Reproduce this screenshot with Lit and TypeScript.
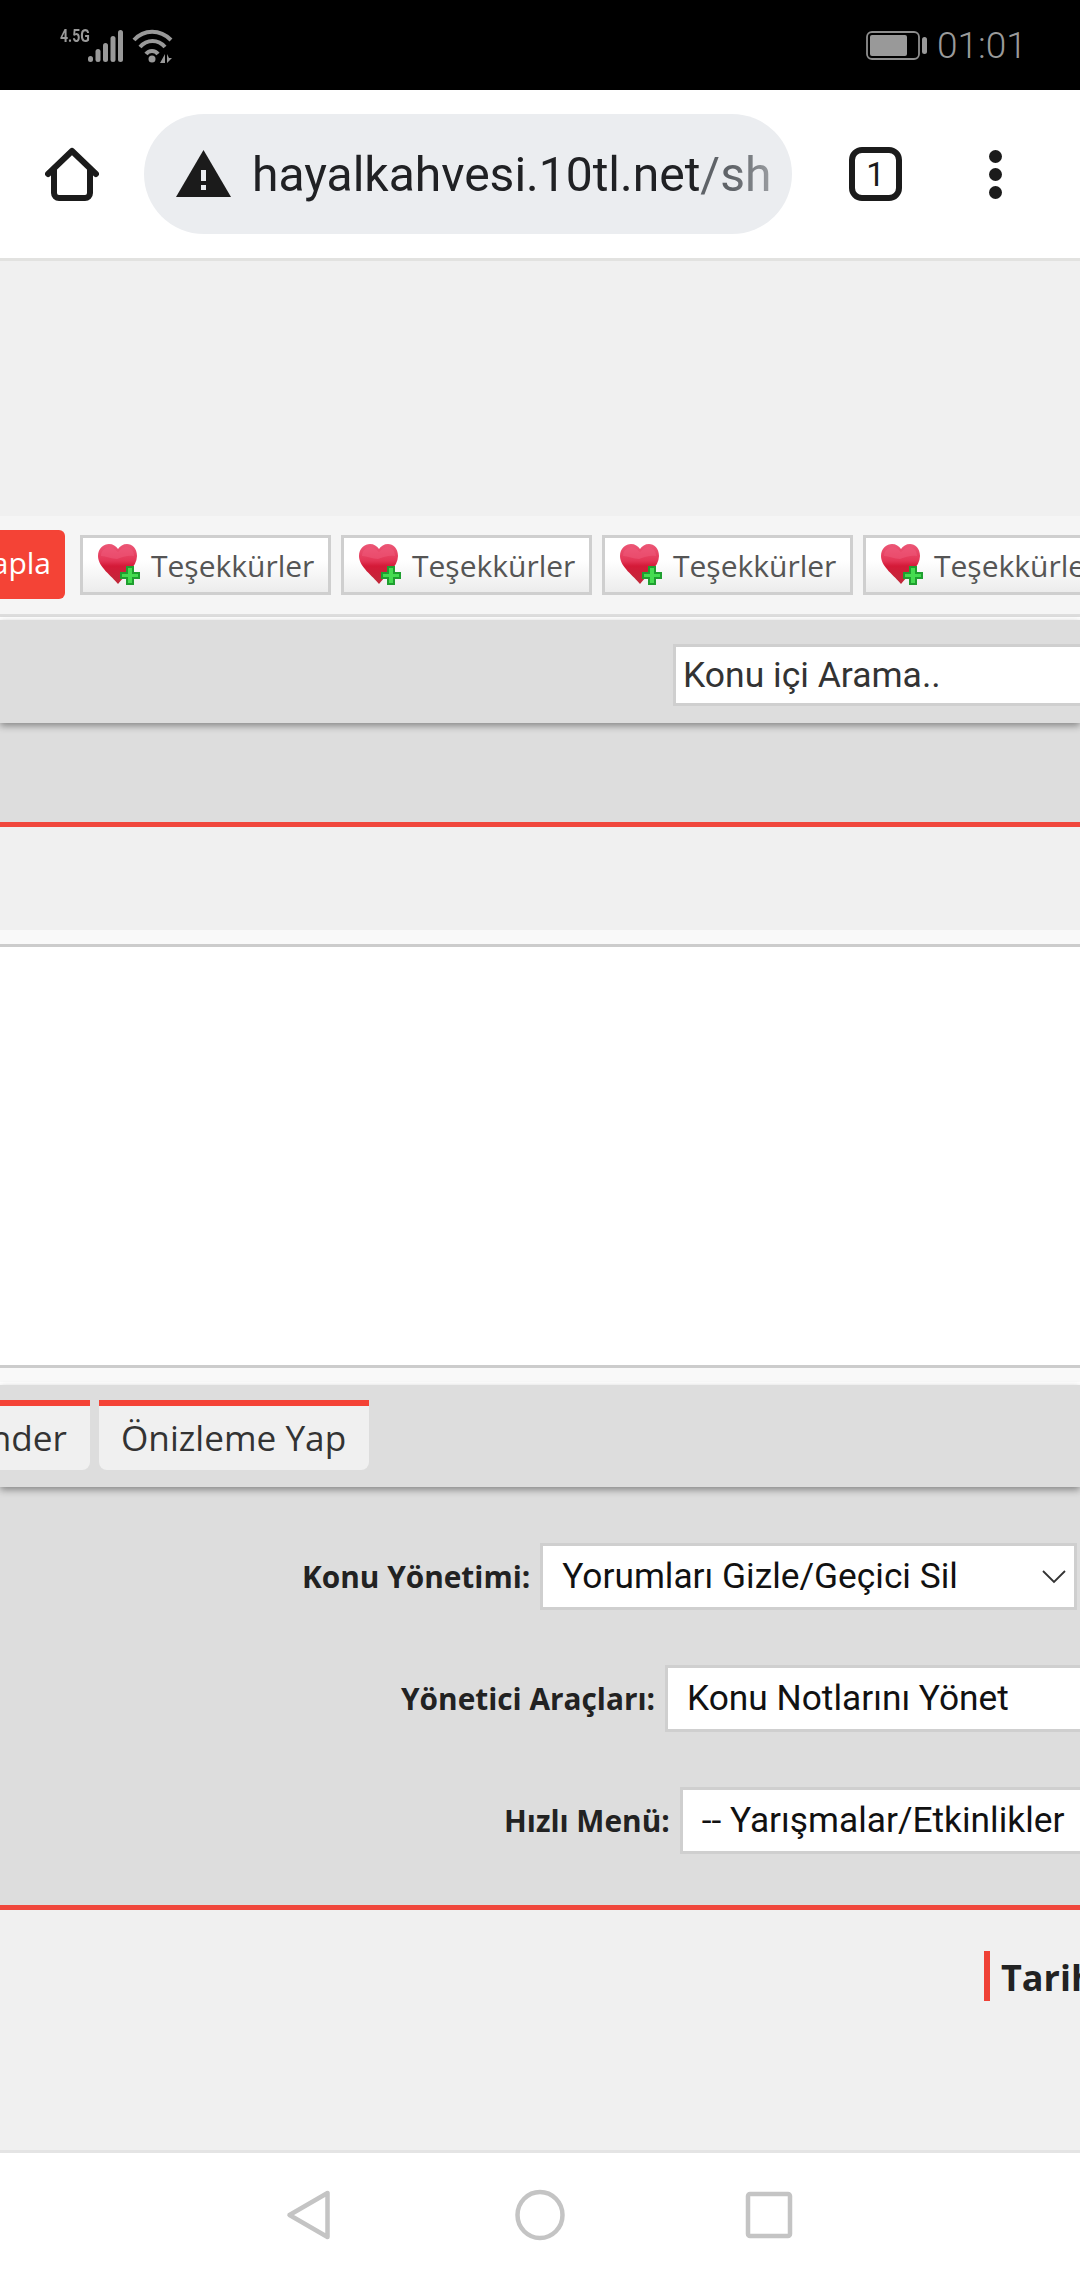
import { LitElement, html, css } from "lit";
import { customElement } from "lit/decorators.js";

const heart = (id: string) => html`<svg class="heart" viewBox="0 0 42 42" width="42" height="42">
  <defs>
    <linearGradient id=${id} x1="0" y1="0" x2="0" y2="1">
      <stop offset="0" stop-color="#ec5877"/>
      <stop offset=".42" stop-color="#e33556"/>
      <stop offset=".55" stop-color="#d41a38"/>
      <stop offset="1" stop-color="#c02a3a"/>
    </linearGradient>
  </defs>
  <path d="M20 40 C14 32 0 23 0 12 C0 4 6 0 11 0 C15 0 18 2 20 5 C22 2 25 0 29 0 C34 0 39 4 39 12 C39 23 26 32 20 40Z" fill=${`url(#${id})`}/>
  <path d="M3 12 C3 6 8 3 12 3 C15 3 18 6 20 8 C22 6 25 3 28 3 C32 3 36 6 36 12 C30 11 25 13 19 15 C13 15 8 12 3 12Z" fill="#ee5a7a" opacity=".55"/>
  <path d="M28 22 h8 v6 h6 v7 h-6 v6 h-8 v-6 h-6 v-7 h6Z" fill="#1f9f30"/>
  <path d="M30 24 h4 v6 h6 v3 h-6 v6 h-4 v-6 h-6 v-3 h6Z" fill="#45dc50"/>
</svg>`;

@customElement("app-root")
export class AppRoot extends LitElement {
  static styles = css`
    :host { display: block; width: 1080px; height: 2280px; overflow: hidden; background: #fff; font-family: "Open Sans", sans-serif; }
    .status { height: 90px; background: #000; display: flex; position: relative; color: #999; }
    .status-left { display: flex; padding: 28px 0 0 60px; height: 34px; }
    .net { font: 700 19px/15px Roboto, sans-serif; width: 30px; height: 15px; transform: scaleX(.74); transform-origin: 0 0; white-space: nowrap; }
    .status-right { display: flex; margin-left: auto; padding: 31px 57px 0 0; align-items: flex-start; }
    .time { font: 300 37px/29px Roboto, sans-serif; margin-left: 9px; color: #9a9a9a; width: 86px; white-space: nowrap; }

    .toolbar { height: 168px; background: #fff; border-bottom: 3px solid #e2e2e0; display: flex; align-items: center; box-sizing: content-box; }
    .home { margin-left: 45px; flex: none; }
    .pill { margin-left: 45px; width: 648px; height: 120px; border-radius: 60px; background: #ebedf0; display: flex; align-items: center; flex: none; }
    .warn { margin-left: 32px; flex: none; margin-top: -2px; }
    .url { margin-left: 21px; width: 522px; overflow: hidden; white-space: nowrap; font: 400 48px/60px Roboto, sans-serif; color: #202124; margin-top: 2px; -webkit-mask-image: linear-gradient(to right, #000 92%, rgba(0,0,0,.55) 100%); mask-image: linear-gradient(to right, #000 92%, rgba(0,0,0,.55) 100%); }
    .url span { color: #5f6368; }
    .tabs { margin-left: 57px; width: 53px; height: 54px; box-sizing: border-box; border: 6px solid #1b1b1b; border-radius: 13px; display: flex; align-items: center; justify-content: center; font: 400 33px/1 Roboto, sans-serif; color: #1b1b1b; flex: none; }
    .dots { margin-left: 87px; display: flex; flex-direction: column; gap: 5px; flex: none; }
    .dots i { width: 13px; height: 13px; border-radius: 50%; background: #1b1b1b; display: block; }

    .ad { height: 255px; background: #f0f0f0; }
    .thanks { height: 98px; background: #f5f5f5; border-bottom: 3px solid #ddd; display: flex; align-items: center; gap: 10px; overflow: hidden; }
    .white3 { height: 3px; background: #fff; }
    .apla { flex: none; width: 65px; height: 69px; margin: -2px 5px 0 0; background: #f44336; color: #fff; border-radius: 0 6px 6px 0; font-size: 30px; line-height: 66px; display: flex; justify-content: flex-end; padding-right: 14px; box-sizing: border-box; overflow: hidden; }
    .thx { flex: none; width: 251px; height: 60px; box-sizing: border-box; border: 3px solid #cfcfcf; background: linear-gradient(#fff 40%, #ececec); display: flex; align-items: center; padding-left: 15px; gap: 11px; color: #555; font-size: 30px; white-space: nowrap; }
    .heart { flex: none; }

    .bar { background: #ddd; box-shadow: 0 3px 7px rgba(0,0,0,.38); position: relative; z-index: 1; }
    .search { height: 103px; box-sizing: border-box; padding: 24px 0 0 673px; overflow: hidden; }
    .input { width: 500px; height: 62px; box-sizing: border-box; border: 3px solid #cfcfcf; background: #fff; font: 400 35.5px/56px Roboto, sans-serif; color: #333; padding-left: 7px; white-space: nowrap; }

    .band { height: 99px; background: #ddd; }
    .red { height: 5px; background: #f0473c; }
    .light { height: 103px; background: #f0f0f0; }
    .pale { height: 14px; background: #f9f9f9; }
    .rule { height: 3px; background: #cccccc; }
    .blank { height: 418px; background: #fff; }

    .actions { height: 102px; box-sizing: border-box; padding-top: 15px; display: flex; gap: 9px; overflow: hidden; }
    .act { flex: none; height: 70px; box-sizing: border-box; border-top: 6px solid #f44336; background: #f0f0f0; border-radius: 0 0 8px 8px; font-size: 35.2px; line-height: 62px; color: #333; white-space: nowrap; }
    .act.first { width: 90px; padding-right: 23px; display: flex; justify-content: flex-end; overflow: hidden; border-radius: 0 0 8px 0; }
    .act.second { width: 270px; padding-left: 22px; }

    .form { height: 418px; box-sizing: border-box; background: #ddd; padding-top: 56px; overflow: hidden; display: flex; flex-direction: column; gap: 55px; }
    .frow { display: flex; align-items: center; height: 67px; gap: 10px; white-space: nowrap; }
    .frow.a { padding-left: 302px; }
    .frow.b { padding-left: 401px; }
    .frow.c { padding-left: 504px; }
    .lab { font-size: 29.8px; font-weight: 700; color: #222; }
    .sel { flex: none; height: 67px; box-sizing: border-box; border: 3px solid #cfcfcf; background: #fff; font: 400 35.3px/59px Roboto, sans-serif; color: #111; padding-left: 19px; display: flex; align-items: center; width: 640px; }
    .frow.a .sel { width: 537px; justify-content: space-between; padding-right: 8px; }

    .foot { height: 240px; box-sizing: border-box; background: #f0f0f0; padding: 41px 0 0 984px; overflow: hidden; }
    .tarih { border-left: 6px solid #ef4136; height: 50px; padding-left: 11px; font-size: 36px; font-weight: 700; line-height: 54px; color: #222; white-space: nowrap; }

    .nav { height: 127px; border-top: 3px solid #e4e4e4; background: #fff; display: flex; align-items: flex-start; box-sizing: content-box; }
    .nav svg { display: block; }
  `;

  render() {
    return html`
      <div class="status">
        <div class="status-left">
          <div class="net">4.5G</div>
          <svg width="120" height="36" viewBox="88 26 120 36" style="margin-left:-2px">
            <g fill="#999">
              <rect x="88" y="54" width="5" height="6" rx="2.500"/>
              <rect x="95.500" y="47" width="5" height="13" rx="2.500"/>
              <rect x="103" y="41" width="5" height="19" rx="2.500"/>
              <rect x="110.500" y="34" width="5" height="26" rx="2.500"/>
              <rect x="118" y="28" width="5" height="32" rx="2.500"/>
              <circle cx="152" cy="57" r="3.500"/>
              <path d="M165 52 v9 h-5Z M167 52 v9 l5-5 h-3Z"/>
            </g>
            <g fill="none" stroke="#999" stroke-width="4">
              <path d="M134 38 C144 27 160 27 171 38"/>
              <path d="M140 45 C147 37 158 37 165 45"/>
              <path d="M146 52 C149 48 155 48 158 52"/>
            </g>
          </svg>
        </div>
        <div class="status-right">
          <svg width="62" height="29" viewBox="0 0 62 29">
            <rect x="1" y="1" width="52" height="27" rx="5" fill="none" stroke="#8e8e8e" stroke-width="1.800"/>
            <rect x="4" y="4" width="37" height="21" rx="2" fill="#999"/>
            <rect x="56" y="6" width="5" height="17" rx="2.500" fill="#999"/>
          </svg>
          <div class="time">01:01</div>
        </div>
      </div>

      <div class="toolbar">
        <svg class="home" width="54" height="54" viewBox="45 147 54 54">
          <path d="M48 174 L72 151 L96 174 M54 170 V193 a5 5 0 0 0 5 5 H85 a5 5 0 0 0 5 -5 V170" fill="none" stroke="#1b1b1b" stroke-width="6" stroke-linecap="round" stroke-linejoin="round"/>
        </svg>
        <div class="pill">
          <svg class="warn" width="55" height="47" viewBox="176 147 55 47">
            <path d="M203.500 147 L231 194 H176Z" fill="#1b1b1b"/>
            <rect x="201" y="167" width="5" height="11" fill="#ebedf0"/>
            <rect x="201" y="182" width="5" height="5" fill="#ebedf0"/>
          </svg>
          <div class="url">hayalkahvesi.10tl.net<span>/sh</span></div>
        </div>
        <div class="tabs">1</div>
        <div class="dots"><i></i><i></i><i></i></div>
      </div>

      <div class="ad"></div>
      <div class="thanks">
        <div class="apla">apla</div>
        ${[1, 2, 3, 4].map((n) => html`<div class="thx">${heart(`h${n}`)}Teşekkürler</div>`)}
      </div>
      <div class="white3"></div>
      <div class="bar search"><div class="input">Konu içi Arama..</div></div>
      <div class="band"></div>
      <div class="red"></div>
      <div class="light"></div>
      <div class="pale"></div>
      <div class="rule"></div>
      <div class="blank"></div>
      <div class="rule"></div>
      <div class="pale"></div>
      <div class="white3"></div>
      <div class="bar actions">
        <div class="act first">nder</div>
        <div class="act second">Önizleme Yap</div>
      </div>
      <div class="form">
        <div class="frow a">
          <div class="lab">Konu Yönetimi:</div>
          <div class="sel">Yorumları Gizle/Geçici Sil
            <svg width="24" height="14" viewBox="0 0 24 14"><path d="M1 1 L12 12 L23 1" fill="none" stroke="#333" stroke-width="1.800"/></svg>
          </div>
        </div>
        <div class="frow b"><div class="lab">Yönetici Araçları:</div><div class="sel">Konu Notlarını Yönet</div></div>
        <div class="frow c"><div class="lab">Hızlı Menü:</div><div class="sel">-- Yarışmalar/Etkinlikler</div></div>
      </div>
      <div class="red"></div>
      <div class="foot"><div class="tarih">Tarih</div></div>
      <div class="nav">
        <svg width="1080" height="127" viewBox="0 2153 1080 127">
          <g fill="none" stroke="#c4c4c4" stroke-width="4.500" stroke-linejoin="round">
            <path d="M327.500 2193 V2237 L289.500 2215Z"/>
            <ellipse cx="540" cy="2215" rx="22.500" ry="23"/>
            <rect x="748" y="2194" width="42" height="42" rx="2"/>
          </g>
        </svg>
      </div>
    `;
  }
}
